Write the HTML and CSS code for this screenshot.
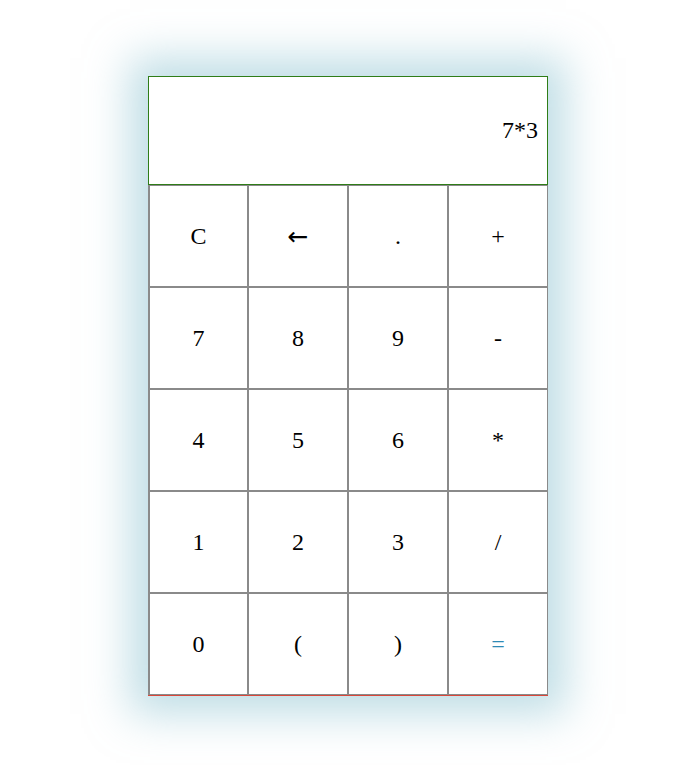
FILE: index.html
```html
<!DOCTYPE html>
<html>
<head>
<meta charset="utf-8">
<link rel="stylesheet" href="styles.css">
</head>
<body>
<div class="calc">
  <div class="display">7*3</div>
  <div class="keys">
    <button class="key">C</button>
    <button class="key arrow">&larr;</button>
    <button class="key">.</button>
    <button class="key">+</button>
    <button class="key">7</button>
    <button class="key">8</button>
    <button class="key">9</button>
    <button class="key">-</button>
    <button class="key">4</button>
    <button class="key">5</button>
    <button class="key">6</button>
    <button class="key">*</button>
    <button class="key">1</button>
    <button class="key">2</button>
    <button class="key">3</button>
    <button class="key">/</button>
    <button class="key">0</button>
    <button class="key">(</button>
    <button class="key">)</button>
    <button class="key equals">=</button>
  </div>
</div>
</body>
</html>
```

FILE: styles.css
```css
html, body {
  margin: 0;
  padding: 0;
  background: #ffffff;
}
body {
  box-sizing: border-box;
  min-height: 765px;
  padding: 76px 0 0 148px;
  font-family: "Liberation Serif", "Times New Roman", serif;
}
.calc {
  width: 400px;
  box-shadow: 0 0 40px 18px rgba(130, 190, 205, 0.5);
  border-bottom: 1px solid #d9473a;
  background: #fff;
}
.display {
  box-sizing: border-box;
  height: 109px;
  border: 1px solid #2f7d18;
  display: flex;
  align-items: center;
  justify-content: flex-end;
  padding-right: 9px;
  font-size: 24px;
  color: #000;
}
.keys {
  display: grid;
  grid-template-columns: 99px repeat(3, 100px);
  border-left: 1px solid #8a8a8a;
}
.key {
  box-sizing: border-box;
  height: 102px;
  width: 100%;
  margin: 0;
  padding: 0;
  border: 1px solid #8a8a8a;
  background: #fff;
  font-family: "Liberation Serif", "DejaVu Serif", serif;
  font-size: 24px;
  color: #000;
}
.arrow {
  font-family: "DejaVu Sans", sans-serif;
  font-size: 25px;
}
.equals {
  color: #2f8ab5;
}
```
